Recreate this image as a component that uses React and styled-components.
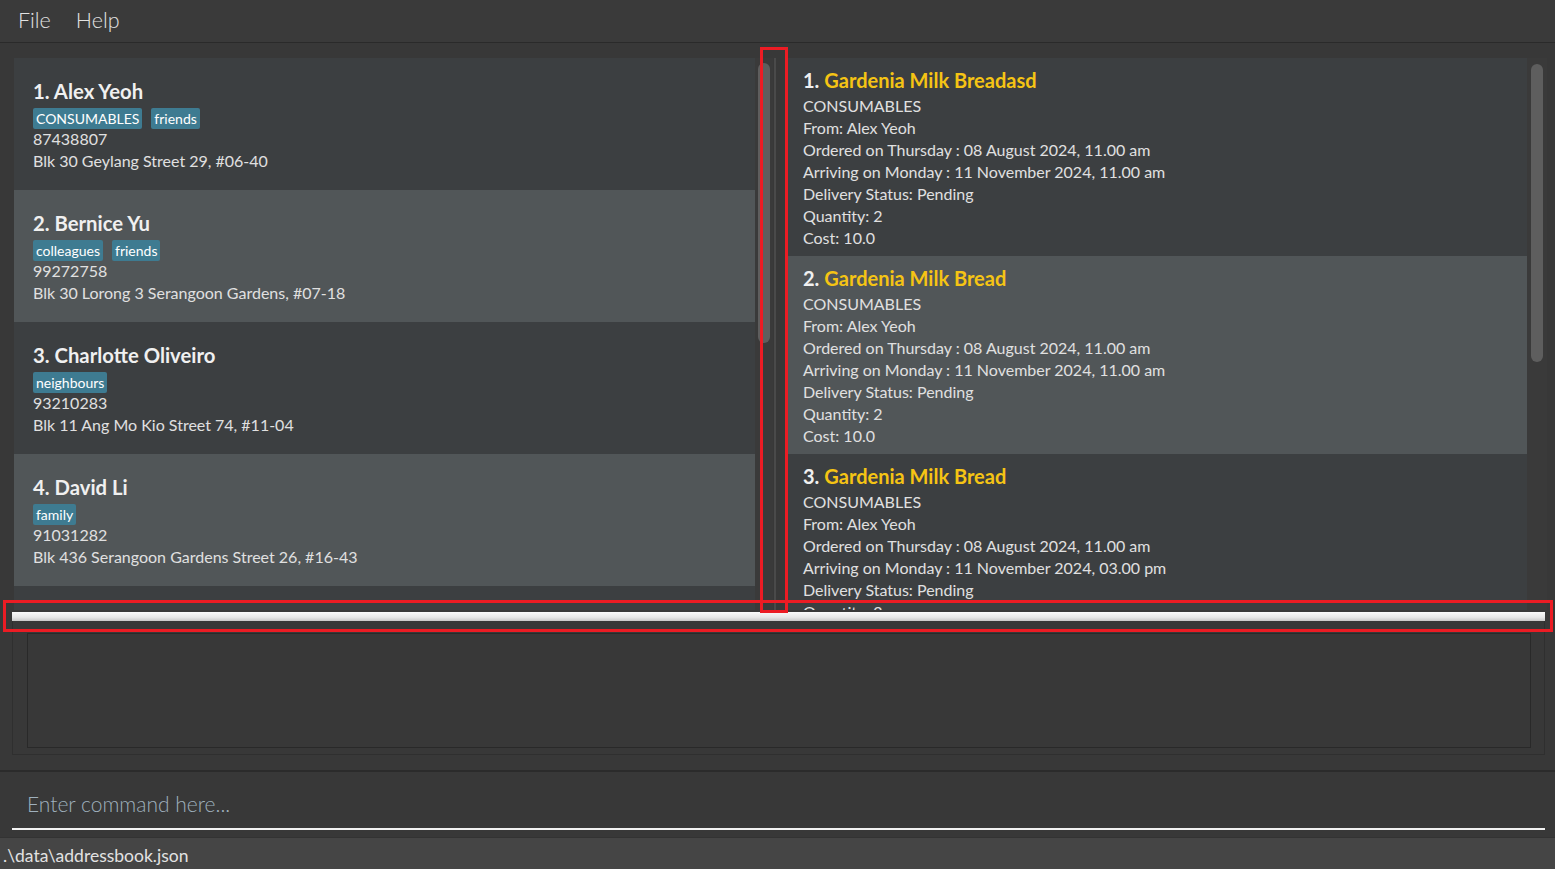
import React from 'react';
import styled, { createGlobalStyle } from 'styled-components';

const GlobalStyle = createGlobalStyle`
  html, body {
    margin: 0;
    padding: 0;
    background: #383838;
  }
  * {
    box-sizing: border-box;
  }
`;

const persons = [
  { name: 'Alex Yeoh', tags: ['CONSUMABLES', 'friends'], phone: '87438807', address: 'Blk 30 Geylang Street 29, #06-40' },
  { name: 'Bernice Yu', tags: ['colleagues', 'friends'], phone: '99272758', address: 'Blk 30 Lorong 3 Serangoon Gardens, #07-18' },
  { name: 'Charlotte Oliveiro', tags: ['neighbours'], phone: '93210283', address: 'Blk 11 Ang Mo Kio Street 74, #11-04' },
  { name: 'David Li', tags: ['family'], phone: '91031282', address: 'Blk 436 Serangoon Gardens Street 26, #16-43' },
];

const orders = [
  { item: 'Gardenia Milk Breadasd', arrive: '11 November 2024, 11.00 am' },
  { item: 'Gardenia Milk Bread', arrive: '11 November 2024, 11.00 am' },
  { item: 'Gardenia Milk Bread', arrive: '11 November 2024, 03.00 pm' },
];

const Window = styled.div`
  position: relative;
  width: 1555px;
  height: 869px;
  display: flex;
  flex-direction: column;
  background: #383838;
  font-family: 'Lato', 'Noto Sans', sans-serif;
  color: #dedede;
  overflow: hidden;
`;

const MenuBar = styled.div`
  height: 43px;
  display: flex;
  align-items: center;
  gap: 25px;
  padding: 0 0 3px 18px;
  background: #3a3a3a;
  border-bottom: 1px solid #2a2a2a;
  flex-shrink: 0;
`;

const MenuItem = styled.span`
  font-size: 21.5px;
  font-weight: 300;
  color: #e2e2e2;
`;

const Main = styled.div`
  height: 569px;
  display: flex;
  padding: 15px 8px 2px 14px;
  flex-shrink: 0;
`;

const ListPane = styled.div`
  width: ${p => p.$width}px;
  height: 100%;
  overflow: hidden;
  background: #3c3f41;
  flex-shrink: 0;
`;

const ScrollTrack = styled.div`
  position: relative;
  width: ${p => p.$width}px;
  height: 100%;
  background: #3a3a3a;
  flex-shrink: 0;
`;

const Thumb = styled.div`
  position: absolute;
  left: ${p => p.$left}px;
  top: ${p => p.$top}px;
  width: 12px;
  height: ${p => p.$height}px;
  border-radius: 6px;
  background: #5e5e5e;
`;

const SplitLine = styled.div`
  width: 2px;
  height: 100%;
  margin: 0 12px 0 1px;
  background: #4a4a4a;
  flex-shrink: 0;
`;

const PersonCard = styled.div`
  height: 132px;
  padding: 20px 19px 0;
  background: ${p => (p.$alt ? '#515658' : '#3c3f41')};
`;

const Name = styled.div`
  font-size: 20.3px;
  line-height: 26px;
  font-weight: 700;
  color: #f0f0f0;
  margin-bottom: 4px;
`;

const Tags = styled.div`
  display: flex;
  gap: 9px;
  height: 21px;
  margin-bottom: -1px;
`;

const Tag = styled.span`
  background: #3e7b91;
  color: #ffffff;
  font-size: 14px;
  line-height: 21px;
  padding: 0 3px;
  border-radius: 2px;
`;

const Line = styled.div`
  font-size: 16px;
  line-height: 22px;
  color: #e0e0e0;
  white-space: nowrap;
`;

const OrderCard = styled.div`
  height: 198px;
  padding: 9px 15px 0;
  background: ${p => (p.$alt ? '#515658' : '#3c3f41')};
`;

const OrderTitle = styled.div`
  font-size: 20px;
  line-height: 26px;
  font-weight: 700;
  color: #f0f0f0;
  margin-bottom: 2px;
`;

const ItemName = styled.span`
  color: #f5c414;
  margin-left: 5px;
`;

const Divider = styled.div`
  height: 9px;
  margin: 0 10px 0 12px;
  background: linear-gradient(#fafafa, #e6e6e6 60%, #c8c8c8);
  flex-shrink: 0;
`;

const ResultOuter = styled.div`
  height: 134px;
  margin: 0 10px 0 12px;
  padding: 12px 13px 6px 14px;
  border: 1px solid #2f2f2f;
  border-top: none;
  flex-shrink: 0;
`;

const ResultBox = styled.div`
  height: 100%;
  border: 1px solid #292929;
  background: #383838;
`;

const CommandArea = styled.div`
  margin-top: 15px;
  height: 67px;
  border-top: 2px solid #2b2b2b;
  padding: 0 10px 0 12px;
  display: flex;
  flex-direction: column;
  flex-shrink: 0;
`;

const CommandInput = styled.div`
  flex: 1;
  display: flex;
  align-items: center;
  padding: 6px 0 0 15px;
  font-size: 21px;
  font-weight: 300;
  color: #9fb0bd;
  border-bottom: 2px solid #f2f2f2;
  margin-bottom: 7px;
`;

const StatusBar = styled.div`
  flex: 1;
  background: #454545;
  border-top: 1px solid #333333;
  display: flex;
  align-items: center;
  padding: 3px 0 0 3px;
  font-size: 17.5px;
  color: #e2e2e2;
`;

const Marker = styled.div`
  position: absolute;
  left: ${p => p.$x}px;
  top: ${p => p.$y}px;
  width: ${p => p.$w}px;
  height: ${p => p.$h}px;
  border: 3px solid #ec1c24;
  pointer-events: none;
`;

export default function App() {
  return (
    <>
      <GlobalStyle />
      <Window>
        <MenuBar>
          <MenuItem>File</MenuItem>
          <MenuItem>Help</MenuItem>
        </MenuBar>
        <Main>
          <ListPane $width={741}>
            {persons.map((p, i) => (
              <PersonCard key={p.name} $alt={i % 2 === 1}>
                <Name>{i + 1}. {p.name}</Name>
                <Tags>
                  {p.tags.map(t => <Tag key={t}>{t}</Tag>)}
                </Tags>
                <Line>{p.phone}</Line>
                <Line>{p.address}</Line>
              </PersonCard>
            ))}
          </ListPane>
          <ScrollTrack $width={18}>
            <Thumb $left={3} $top={5} $height={280} />
          </ScrollTrack>
          <SplitLine />
          <ListPane $width={739}>
            {orders.map((o, i) => (
              <OrderCard key={i} $alt={i % 2 === 1}>
                <OrderTitle>
                  {i + 1}.<ItemName>{o.item}</ItemName>
                </OrderTitle>
                <Line>CONSUMABLES</Line>
                <Line>From: Alex Yeoh</Line>
                <Line>Ordered on Thursday : 08 August 2024, 11.00 am</Line>
                <Line>Arriving on Monday : {o.arrive}</Line>
                <Line>Delivery Status: Pending</Line>
                <Line>Quantity: 2</Line>
                <Line>Cost: 10.0</Line>
              </OrderCard>
            ))}
          </ListPane>
          <ScrollTrack $width={20}>
            <Thumb $left={4} $top={6} $height={298} />
          </ScrollTrack>
        </Main>
        <Divider />
        <ResultOuter>
          <ResultBox />
        </ResultOuter>
        <CommandArea>
          <CommandInput>Enter command here...</CommandInput>
        </CommandArea>
        <StatusBar>.\data\addressbook.json</StatusBar>
        <Marker $x={760} $y={47} $w={28} $h={566} />
        <Marker $x={3} $y={600} $w={1550} $h={32} />
      </Window>
    </>
  );
}
